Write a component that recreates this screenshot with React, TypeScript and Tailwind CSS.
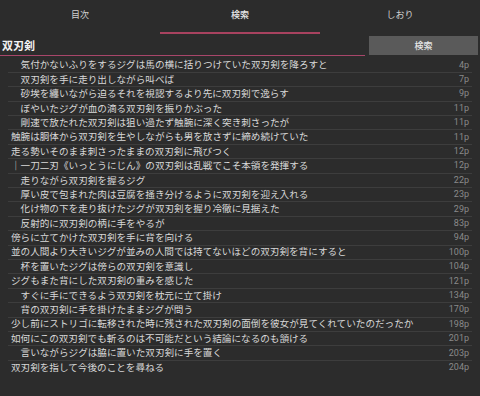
import React from 'react'

type Hit = {
  text: string
  page: string
}

const hits: Hit[] = [
  { text: '　気付かないふりをするジグは馬の横に括りつけていた双刃剣を降ろすと', page: '4p' },
  { text: '　双刃剣を手に走り出しながら叫べば', page: '7p' },
  { text: '　砂埃を纏いながら迫るそれを視認するより先に双刃剣で逸らす', page: '9p' },
  { text: '　ぼやいたジグが血の滴る双刃剣を振りかぶった', page: '11p' },
  { text: '　剛速で放たれた双刃剣は狙い過たず触腕に深く突き刺さったが', page: '11p' },
  { text: '触腕は胴体から双刃剣を生やしながらも男を放さずに締め続けていた', page: '11p' },
  { text: '走る勢いそのまま刺さったままの双刃剣に飛びつく', page: '12p' },
  { text: '｜一刀二刃《いっとうにじん》の双刃剣は乱戦でこそ本領を発揮する', page: '12p' },
  { text: '　走りながら双刃剣を握るジグ', page: '22p' },
  { text: '　厚い皮で包まれた肉は豆腐を掻き分けるように双刃剣を迎え入れる', page: '23p' },
  { text: '　化け物の下を走り抜けたジグが双刃剣を握り冷徹に見据えた', page: '29p' },
  { text: '　反射的に双刃剣の柄に手をやるが', page: '83p' },
  { text: '傍らに立てかけた双刃剣を手に背を向ける', page: '94p' },
  { text: '並の人間より大きいジグが並みの人間では持てないほどの双刃剣を背にすると', page: '100p' },
  { text: '　杯を置いたジグは傍らの双刃剣を意識し', page: '104p' },
  { text: 'ジグもまた背にした双刃剣の重みを感じた', page: '121p' },
  { text: '　すぐに手にできるよう双刃剣を枕元に立て掛け', page: '134p' },
  { text: '　背の双刃剣に手を掛けたままジグが問う', page: '170p' },
  { text: '少し前にストリゴに転移された時に残された双刃剣の面倒を彼女が見てくれていたのだったか', page: '198p' },
  { text: '如何にこの双刃剣でも斬るのは不可能だという結論になるのも頷ける', page: '201p' },
  { text: '　言いながらジグは脇に置いた双刃剣に手を置く', page: '203p' },
  { text: '双刃剣を指して今後のことを尋ねる', page: '204p' },
]

const tabs = ['目次', '検索', 'しおり']

export default function App() {
  return (
    <div className="w-[480px] h-[396px] bg-[#2c2c2c] overflow-hidden font-['Noto_Sans_CJK_JP',sans-serif]">
      {/* Tabs */}
      <div className="flex h-[34px]">
        {tabs.map((tab, i) => (
          <div key={tab} className="flex-1 flex flex-col">
            <div
              className={`flex-1 flex items-center justify-center text-[9px] pb-[2px] ${
                i === 1 ? 'text-[#e8e8e8] font-medium' : 'text-[#d0d0d0]'
              }`}
            >
              {tab}
            </div>
            <div className={`h-[2px] ${i === 1 ? 'bg-[#a8425f]' : ''}`} />
          </div>
        ))}
      </div>

      {/* Search row */}
      <div className="flex items-end h-[24px] pb-[2px]">
        <div className="flex-1 h-[21px] flex items-center pl-[2px] border-b-[1.5px] border-[#a8466a] mr-[4px] text-[11px] font-bold text-[#f2f2f2]">
          双刃剣
        </div>
        <button className="w-[109px] h-[19px] mr-[2px] mb-[1px] bg-[#5a5a5a] text-[9px] font-medium text-[#e6e6e6] flex items-center justify-center">
          検索
        </button>
      </div>

      {/* Results */}
      <div className="mx-[8px] pt-[0.5px]">
        {hits.map((hit, i) => (
          <div
            key={i}
            className={`h-[14.4px] flex items-center justify-between pl-[3px] pr-[3px] ${
              i < hits.length - 1 ? 'border-b border-[#3d3d3d]' : ''
            }`}
          >
            <span className="text-[9.6px] leading-none text-[#d8d8d8] whitespace-pre">{hit.text}</span>
            <span className="text-[9px] leading-none text-[#8a8a8a] font-['Roboto',sans-serif]">{hit.page}</span>
          </div>
        ))}
      </div>
    </div>
  )
}
